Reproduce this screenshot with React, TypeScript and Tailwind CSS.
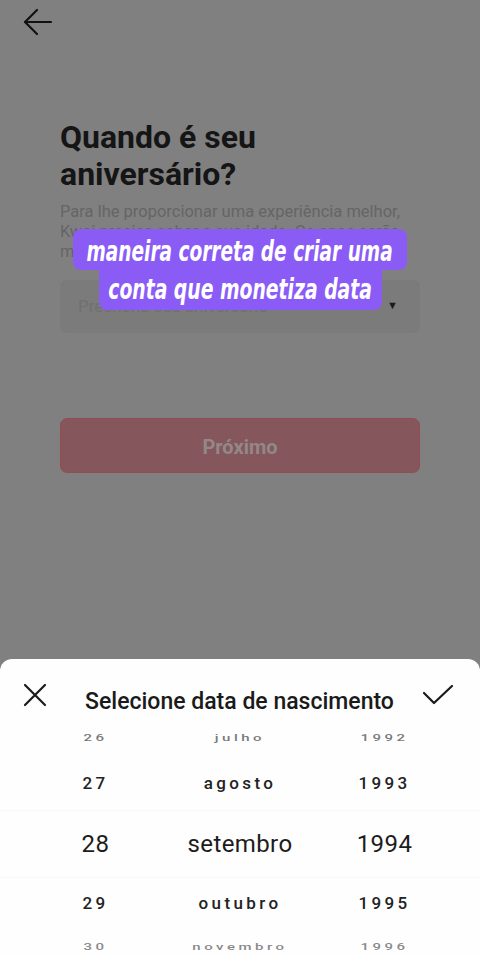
import React from "react";

function BackArrow() {
  return (
    <svg width="30" height="28" viewBox="0 0 30 28" fill="none" stroke="#111" strokeWidth="2.2" strokeLinecap="round" strokeLinejoin="round">
      <path d="M28 14H2" />
      <path d="M14 2L2 14l12 12" />
    </svg>
  );
}

function CloseIcon() {
  return (
    <svg width="24" height="24" viewBox="0 0 24 24" fill="none" stroke="#1a1a1a" strokeWidth="2.2" strokeLinecap="round">
      <path d="M2 2l20 20M22 2L2 22" />
    </svg>
  );
}

function CheckIcon() {
  return (
    <svg width="32" height="22" viewBox="0 0 32 22" fill="none" stroke="#1a1a1a" strokeWidth="2.2" strokeLinecap="round" strokeLinejoin="round">
      <path d="M2 9l10 10L30 2" />
    </svg>
  );
}

function Row({ d, m, y, cls, rowCls }: { d: string; m: string; y: string; cls: string; rowCls: string }) {
  return (
    <div className={`grid grid-cols-[191px_98px_191px] ${rowCls}`}>
      <div className="flex justify-center whitespace-nowrap">
        <span className={cls}>{d}</span>
      </div>
      <div className="flex justify-center whitespace-nowrap">
        <span className={cls}>{m}</span>
      </div>
      <div className="flex justify-center whitespace-nowrap">
        <span className={cls}>{y}</span>
      </div>
    </div>
  );
}

export default function App() {
  return (
    <div className="relative w-[480px] h-[954px] overflow-hidden bg-[#808080] font-['Roboto',sans-serif]">
      {/* page */}
      <div className="h-[44px] pl-[23px] pt-[8px]">
        <BackArrow />
      </div>
      <div className="px-[60px]">
        <h1 className="mt-[75px] text-[32px] leading-[37px] font-bold text-[#151515]">
          Quando é seu
          <br />
          aniversário?
        </h1>
        <p className="mt-[9px] text-[16.5px] leading-[20px] text-[#656565]">
          Para lhe proporcionar uma experiência melhor, Kwai precisa saber a sua idade. Os anos serão mantidos em sigilo.
        </p>
        <div className="mt-[18px] h-[53px] rounded-[6px] bg-[#7b7b7b] flex items-center justify-between pl-[18px] pr-[22px]">
          <span className="text-[17px] text-[#707070]">Preencha seu aniversário</span>
          <span className="text-[11px] text-[#1a1a1a]">▼</span>
        </div>
        <div className="mt-[85px] h-[55px] rounded-[7px] bg-[#85565b] border border-[#944c54] flex items-center justify-center">
          <span className="text-[20px] font-bold text-[#928888] mt-[2px]">Próximo</span>
        </div>
      </div>

      {/* caption overlay */}
      <div className="absolute left-0 right-0 top-[229px] flex flex-col items-center font-['DejaVu_Sans_Condensed',sans-serif] italic font-bold text-white">
        <div className="w-[334px] h-[41px] rounded-[8px] bg-[#8a5cf5] flex items-center justify-center">
          <span className="inline-block whitespace-nowrap text-[29px] leading-none scale-x-[0.71] mt-[3px]">maneira correta de criar uma</span>
        </div>
        <div className="-mt-[1px] w-[283px] h-[41px] rounded-b-[8px] bg-[#8a5cf5] flex items-center justify-center">
          <span className="inline-block whitespace-nowrap text-[29px] leading-none scale-x-[0.72]">conta que monetiza data</span>
        </div>
      </div>

      {/* bottom sheet */}
      <div className="absolute left-0 right-0 bottom-0 h-[295px] rounded-t-[12px] bg-[#fefefe]">
        <div className="h-[68px] flex items-start justify-between px-[23px]">
          <div className="mt-[24px]">
            <CloseIcon />
          </div>
          <div className="mt-[30px] ml-[10px] text-[23px] leading-[26px] font-medium text-[#1a1a1a]">
            Selecione data de nascimento
          </div>
          <div className="mt-[25px] mr-[3px]">
            <CheckIcon />
          </div>
        </div>
        <Row d="26" m="julho" y="1992" rowCls="h-[22px] items-center" cls="inline-block text-[15px] leading-[20px] font-medium tracking-[3.5px] text-[#7a7a7a] scale-y-[0.6]" />
        <Row d="27" m="agosto" y="1993" rowCls="h-[61px] pt-[24px]" cls="text-[17px] leading-[20px] font-medium tracking-[3.4px] text-[#222222]" />
        <Row d="28" m="setembro" y="1994" rowCls="h-[68px] items-center border-t border-b border-[#f8f8f8]" cls="text-[24px] leading-[28px] tracking-[0.4px] text-[#1c1c1c]" />
        <Row d="29" m="outubro" y="1995" rowCls="h-[57px] pt-[15px]" cls="text-[17px] leading-[20px] font-medium tracking-[3.4px] text-[#222222]" />
        <Row d="30" m="novembro" y="1996" rowCls="h-[24px] items-center" cls="inline-block text-[15px] leading-[20px] font-medium tracking-[3.5px] text-[#8a8a8a] scale-y-[0.6]" />
      </div>
    </div>
  );
}
